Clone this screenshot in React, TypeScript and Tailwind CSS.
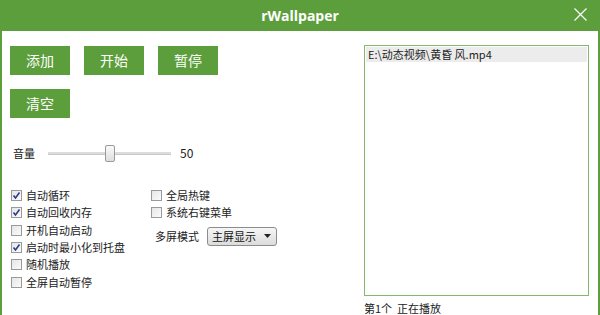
import React from "react";

const font = { fontFamily: '"Microsoft YaHei", "Noto Sans CJK SC", "Liberation Sans", sans-serif' };

function Btn({ label }: { label: string }) {
  return (
    <div className="w-[60px] h-[29px] bg-[#5c9e3b] text-white text-[14px] flex items-center justify-center">
      {label}
    </div>
  );
}

function Check({ label, checked }: { label: string; checked?: boolean }) {
  return (
    <div className="flex items-center h-[17.3px] gap-[4px]">
      <div className="w-[11px] h-[11px] border border-[#9a9a9a] bg-gradient-to-br from-[#e6e6e6] to-[#fbfbfb] flex items-center justify-center">
        {checked && (
          <svg width="9" height="9" viewBox="0 0 9 9">
            <path d="M1.5 4.5 L3.5 7 L7.5 1.5" stroke="#2c3c8c" strokeWidth="1.6" fill="none" />
          </svg>
        )}
      </div>
      <span className="text-[11px] text-[#222] leading-none">{label}</span>
    </div>
  );
}

export default function App() {
  return (
    <div className="w-[600px] h-[315px] bg-[#5c9e3b] flex flex-col overflow-hidden" style={font}>
      <div className="h-[31px] relative flex items-center justify-center shrink-0">
        <span className="text-white font-bold text-[14px]" style={{ fontFamily: '"Open Sans", "Liberation Sans", sans-serif' }}>
          rWallpaper
        </span>
        <svg className="absolute left-[574px] top-[8px]" width="13" height="13" viewBox="0 0 13 13">
          <path d="M0.5 0.5 L12.5 12.5 M12.5 0.5 L0.5 12.5" stroke="white" strokeWidth="1.2" />
        </svg>
      </div>
      <div className="flex-1 mx-[2px] bg-white flex">
        <div className="w-[362px] flex flex-col pl-[8px] pt-[15px]">
          <div className="flex gap-[14px]">
            <Btn label="添加" />
            <Btn label="开始" />
            <Btn label="暂停" />
          </div>
          <div className="mt-[14px]">
            <Btn label="清空" />
          </div>
          <div className="flex items-center mt-[25px] h-[20px]">
            <span className="text-[11px] text-[#222] ml-[3px] w-[35px]">音量</span>
            <div className="relative w-[123px] h-[17px] flex items-center">
              <div className="w-full h-[3px] bg-[#dcdcdc] border-b border-[#c8c8c8]" />
              <div className="absolute left-[57px] top-0 w-[10px] h-[17px] border border-[#9a9a9a] rounded-[2px] bg-gradient-to-b from-[#fafafa] to-[#dedede]" />
            </div>
            <span className="text-[12px] text-[#222] ml-[9px]">50</span>
          </div>
          <div className="flex mt-[24px]">
            <div className="flex flex-col w-[140px] ml-[1px]">
              <Check label="自动循环" checked />
              <Check label="自动回收内存" checked />
              <Check label="开机自动启动" />
              <Check label="启动时最小化到托盘" checked />
              <Check label="随机播放" />
              <Check label="全屏自动暂停" />
            </div>
            <div className="flex flex-col">
              <Check label="全局热键" />
              <Check label="系统右键菜单" />
              <div className="flex items-center mt-[5px] ml-[4px] gap-[8px]">
                <span className="text-[11px] text-[#222]">多屏模式</span>
                <div className="w-[70px] h-[19px] border border-[#8c8c8c] rounded-[3px] bg-gradient-to-b from-[#f6f6f6] to-[#dcdcdc] flex items-center justify-between pl-[4px] pr-[4px]">
                  <span className="text-[11px] text-[#111] leading-none">主屏显示</span>
                  <svg width="7" height="4" viewBox="0 0 7 4" className="mr-[1px]">
                    <path d="M0 0 L7 0 L3.5 4 Z" fill="#222" />
                  </svg>
                </div>
              </div>
            </div>
          </div>
        </div>
        <div className="flex flex-col pt-[14px]">
          <div className="w-[225px] h-[251px] border border-[#82b96c] p-[1px]">
            <div className="h-[15px] bg-[#ececec] flex items-center pl-[2px] text-[11px] text-[#222] leading-none">
              E:\动态视频\黄昏 风.mp4
            </div>
          </div>
          <div className="text-[11px] text-[#222] mt-[6px] leading-[13px] whitespace-pre">第1个  正在播放</div>
        </div>
      </div>
    </div>
  );
}
